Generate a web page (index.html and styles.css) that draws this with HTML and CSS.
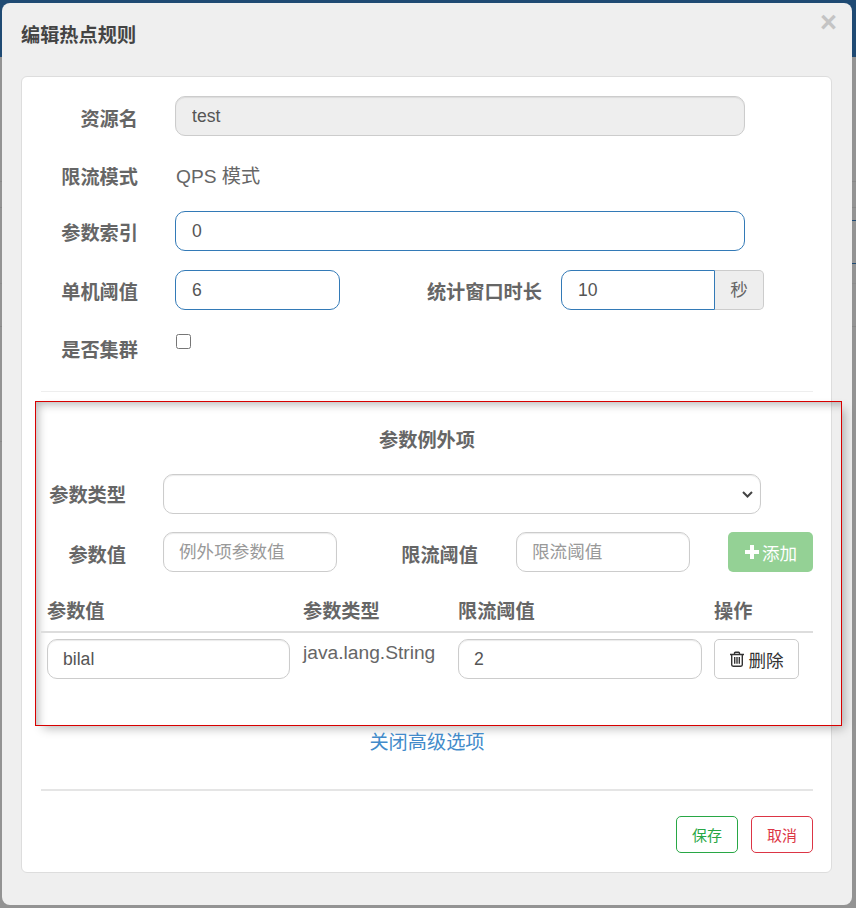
FILE: index.html
```html
<!DOCTYPE html>
<html lang="zh">
<head>
  <meta charset="UTF-8" />
  <meta name="viewport" content="width=device-width, initial-scale=1.0"/>
  <title>编辑热点规则</title>
  <link rel="stylesheet" href="styles.css">
</head>
<body>
  <div class="modal">
    <div class="modal-header">
      <div class="modal-title">编辑热点规则</div>
      <span class="close">×</span>
    </div>

    <div class="card">
      <form class="rule-form">
        <div class="form-row row-first">
          <label class="form-label">资源名</label>
          <input class="form-input input-wide" type="text" value="test" disabled>
        </div>
        <div class="form-row row-static">
          <label class="form-label label-flat">限流模式</label>
          <span class="form-static">QPS 模式</span>
        </div>
        <div class="form-row row-index">
          <label class="form-label">参数索引</label>
          <input class="form-input input-wide is-active" type="text" value="0">
        </div>
        <div class="form-row row-count">
          <label class="form-label">单机阈值</label>
          <input class="form-input input-count is-active" type="text" value="6">
          <label class="form-label label-window">统计窗口时长</label>
          <div class="input-group">
            <input class="form-input is-active" type="text" value="10">
            <span class="input-addon">秒</span>
          </div>
        </div>
        <div class="form-row row-cluster">
          <label class="form-label">是否集群</label>
          <input class="form-check" type="checkbox">
        </div>

        <div class="divider-thin"></div>

        <div class="param-box">
          <div class="param-title">参数例外项</div>
          <div class="param-row">
            <label class="param-label">参数类型</label>
            <select class="form-input param-select"><option></option></select>
          </div>
          <div class="param-row param-add">
            <label class="param-label">参数值</label>
            <input class="form-input param-input" type="text" placeholder="例外项参数值">
            <label class="param-label label-limit">限流阈值</label>
            <input class="form-input param-input" type="text" placeholder="限流阈值">
            <button class="btn-add" type="button">
              <svg class="icon-plus" viewBox="0 0 16 16"><path d="M6 1h4v5h5v4h-5v5H6v-5H1V6h5z"/></svg>添加
            </button>
          </div>

          <table class="param-table">
            <thead>
              <tr>
                <th class="col-value">参数值</th>
                <th class="col-type">参数类型</th>
                <th class="col-limit">限流阈值</th>
                <th>操作</th>
              </tr>
            </thead>
            <tbody>
              <tr>
                <td><input class="form-input input-value" type="text" value="bilal"></td>
                <td class="cell-type">java.lang.String</td>
                <td><input class="form-input" type="text" value="2"></td>
                <td>
                  <button class="btn-delete" type="button">
                    <svg class="icon-trash" viewBox="0 0 16 16">
                      <path d="M1 3.500h14M5.500 3.500V2.200q0-.9.9-.9h3.200q.9 0 .9.9v1.300M2.700 3.500v10.300q0 1.400 1.400 1.400h7.800q1.400 0 1.400-1.400V3.500M5.700 6v6.800M8 6v6.800M10.300 6v6.800"/>
                    </svg>删除
                  </button>
                </td>
              </tr>
            </tbody>
          </table>
        </div>

        <div class="advanced"><a href="#" class="advanced-link">关闭高级选项</a></div>

        <div class="divider-thick"></div>

        <div class="form-actions">
          <button class="btn-outline btn-save" type="button">保存</button>
          <button class="btn-outline btn-cancel" type="button">取消</button>
        </div>
      </form>
    </div>
  </div>
</body>
</html>
```

FILE: styles.css
```css
* {
  box-sizing: border-box;
  margin: 0;
  padding: 0;
}

html, body {
  height: 100%;
}

/* page dimmed behind the dialog */
body {
  font-family: "Liberation Sans", "Noto Sans CJK SC", sans-serif;
  color: #666;
  overflow: hidden;
  padding: 3px 4px 3px 2px;
  background-color: #939393;
  background-image:
    linear-gradient(#1f4a73, #1f4a73),
    linear-gradient(#888, #888),
    linear-gradient(#888, #888),
    linear-gradient(#8c8c8c, #8c8c8c),
    linear-gradient(#888, #888),
    linear-gradient(#888, #888),
    linear-gradient(#1f4a73, #1f4a73),
    linear-gradient(#1f4a73, #1f4a73);
  background-repeat: no-repeat;
  background-size:
    100% 57px,
    100% 1px,
    100% 1px,
    100% 1px,
    100% 1px,
    2px 1px,
    4px 1px,
    4px 1px;
  background-position:
    0 0,
    0 181px,
    0 207px,
    0 283px,
    0 326px,
    0 441px,
    100% 220px,
    100% 263px;
}

.modal {
  height: 902px;
  background: #efefef;
  border-radius: 8px;
  display: flex;
  flex-direction: column;
}

.modal-header {
  height: 73px;
  padding: 21px 0 0 19px;
  display: flex;
  justify-content: space-between;
}

.modal-title {
  font-size: 19.2px;
  line-height: 24px;
  font-weight: 700;
  color: #444;
}

.close {
  font-size: 29px;
  line-height: 29px;
  font-weight: 700;
  color: #c4c4c4;
  margin: -16px 15px 0 0;
}

.card {
  height: 797px;
  margin: 0 20px 0 19px;
  background: #fff;
  border: 1px solid #ddd;
  border-radius: 6px;
  padding: 19px 18px 0 19px;
}

.form-row {
  display: flex;
  align-items: center;
  height: 40px;
}

.row-static {
  margin-top: 20px;
}

.row-index {
  margin-top: 15px;
}

.row-count {
  margin-top: 19px;
}

.row-cluster {
  margin-top: 21px;
  align-items: flex-start;
}

.form-label {
  flex: none;
  width: 97px;
  margin-right: 37px;
  text-align: right;
  white-space: nowrap;
  font-size: 19.2px;
  line-height: 24px;
  font-weight: 700;
  padding-top: 5px;
}

.row-first .form-label {
  padding-top: 7px;
}

.label-flat {
  padding-top: 4px;
}

.row-cluster .form-label {
  padding-top: 8px;
}

.form-input {
  display: block;
  width: 100%;
  height: 40px;
  padding: 0 16px;
  font-family: inherit;
  font-size: 17.6px;
  color: #555;
  background: #fff;
  border: 1px solid #ccc;
  border-radius: 10px;
  box-shadow: inset 0 1px 1px rgba(0, 0, 0, 0.08);
  outline: none;
}

.form-input::placeholder {
  color: #999;
  opacity: 1;
}

.form-input:disabled {
  background: #eee;
}

.form-input.is-active {
  border-color: #337ab7;
  box-shadow: none;
}

.input-wide {
  width: 570px;
}

.form-static {
  font-size: 19.2px;
  line-height: 24px;
  margin-left: 1px;
  padding-top: 2px;
}

.input-count {
  width: 165px;
}

.label-window {
  width: 116px;
  margin: 0 19px 0 86px;
}

.input-group {
  display: flex;
  width: 203px;
}

.input-group .form-input {
  width: 154px;
  border-radius: 10px 0 0 10px;
}

.input-addon {
  flex: 1;
  display: flex;
  align-items: center;
  justify-content: center;
  padding-bottom: 3px;
  font-size: 17.6px;
  background: #eee;
  border: 1px solid #ccc;
  border-left: none;
  border-radius: 0 5px 5px 0;
}

.form-check {
  width: 15px;
  height: 15px;
  margin-top: 3px;
  margin-left: 1px;
}

.divider-thin {
  height: 1px;
  margin-top: 20px;
  background: #eee;
}

/* marked up region, card edge shows through it */
.param-box {
  margin: 9px -29px 0 -6px;
  height: 325px;
  padding: 0 28px 0 5px;
  border: 1px solid #d80000;
  box-shadow: inset 5px 5px 10px -3px rgba(0, 0, 0, 0.3), 5px 5px 10px -3px rgba(0, 0, 0, 0.3);
}

.param-box .form-input {
  padding: 0 15px;
}

.param-title {
  margin: 27px 0 21px;
  text-align: center;
  font-size: 19.2px;
  line-height: 24px;
  font-weight: 700;
}

.param-row {
  display: flex;
  align-items: center;
  height: 40px;
}

.param-add {
  margin-top: 18px;
}

.param-label {
  flex: none;
  width: 85px;
  margin-right: 37px;
  text-align: right;
  white-space: nowrap;
  font-size: 19.2px;
  line-height: 24px;
  font-weight: 700;
  padding-top: 4px;
}

.param-add .param-label {
  padding-top: 8px;
}

.param-select {
  width: 598px;
  appearance: none;
  background: #fff url("data:image/svg+xml,%3Csvg xmlns='http://www.w3.org/2000/svg' viewBox='0 0 11 7'%3E%3Cpath d='M1 1l4.500 4.500L10 1' fill='none' stroke='%23444' stroke-width='2'/%3E%3C/svg%3E") no-repeat right 7px center / 11px 7px;
}

.param-input {
  flex: none;
  width: 174px;
}

.param-add .label-limit {
  width: 78px;
  margin: 0 38px 0 63px;
}

.btn-add {
  flex: none;
  width: 85px;
  height: 40px;
  margin-left: 38px;
  display: flex;
  align-items: center;
  justify-content: center;
  font-family: inherit;
  font-size: 17.6px;
  color: #fff;
  background: #94d195;
  border: none;
  border-radius: 5px;
}

.icon-plus {
  width: 16px;
  height: 16px;
  fill: #fff;
  margin-right: 2px;
}

.param-table {
  width: 772px;
  margin-top: 17px;
  border-collapse: collapse;
  table-layout: fixed;
}

.param-table th {
  height: 43px;
  padding: 0 6px;
  text-align: left;
  font-size: 19.2px;
  font-weight: 700;
  border-bottom: 2px solid #ddd;
}

.param-table td {
  padding: 6px;
  vertical-align: top;
}

.col-value,
.col-limit {
  width: 256px;
}

.col-type {
  width: 155px;
}

.param-box .input-value {
  width: 243px;
}

.cell-type {
  font-size: 19.2px;
  line-height: 28px;
}

.btn-delete {
  width: 85px;
  height: 40px;
  display: flex;
  align-items: center;
  justify-content: center;
  font-family: inherit;
  font-size: 17.6px;
  color: #333;
  background: #fff;
  border: 1px solid #ccc;
  border-radius: 5px;
}

.icon-trash {
  width: 16px;
  height: 16px;
  margin-right: 3px;
  fill: none;
  stroke: #333;
  stroke-width: 1.400;
}

.advanced {
  margin-top: 5px;
  text-align: center;
  font-size: 19.2px;
  line-height: 24px;
}

.advanced-link {
  color: #428bca;
  text-decoration: none;
}

.divider-thick {
  height: 2px;
  margin-top: 34px;
  background: #e5e5e5;
}

.form-actions {
  display: flex;
  justify-content: flex-end;
  gap: 13px;
  margin-top: 25px;
}

.btn-outline {
  width: 62px;
  height: 37px;
  font-family: inherit;
  font-size: 15px;
  background: #fff;
  border: 1px solid;
  border-radius: 5px;
}

.btn-save {
  color: #28a745;
  border-color: #28a745;
}

.btn-cancel {
  color: #dc3545;
  border-color: #dc3545;
}
```
